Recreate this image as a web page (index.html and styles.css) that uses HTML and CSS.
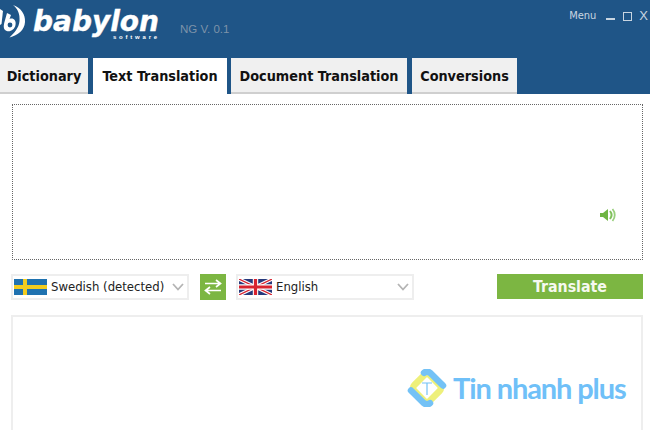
FILE: index.html
```html
<!DOCTYPE html>
<html lang="en">
<head>
<meta charset="utf-8">
<title>Babylon</title>
<link rel="stylesheet" href="styles.css">
</head>
<body>
<div class="app">
  <header class="header">
    <div class="topbar">
      <div class="brand">
        <svg class="mark" viewBox="0 0 30 42" width="30" height="42" aria-hidden="true">
          <path d="M0 9 L3 11 L1.500 24 L0 25Z" fill="#fff"/>
          <path d="M13 5 C21 8 25.500 14 25 22 C24.500 30 18 35.500 9.500 37.500 C14 33 19 28 19.500 21 C20 14 18 9 13 5Z" fill="#fff"/>
          <path d="M7 13 L11 15 L9.500 19 C13 17.500 16.500 20 15.500 25 C14.500 30.500 8.500 33 5 30 C3.500 28.500 3.500 26 4.200 23Z" fill="#fff"/>
          <circle cx="10" cy="25" r="2.400" fill="#1f5587"/>
        </svg>
        <div class="wordmark">
          <span class="word">babylon</span>
          <span class="soft">software</span>
        </div>
        <span class="version">NG V. 0.1</span>
      </div>
      <div class="winctl">
        <span class="menu">Menu</span>
        <span class="min"></span>
        <span class="max"></span>
        <span class="close">X</span>
      </div>
    </div>
    <nav class="tabs">
      <span class="tab tab-dict">Dictionary</span>
      <span class="tab tab-text active">Text Translation</span>
      <span class="tab tab-doc">Document Translation</span>
      <span class="tab tab-conv">Conversions</span>
    </nav>
  </header>
  <main class="content">
    <div class="input">
      <svg class="speaker" viewBox="0 0 16 14" width="16" height="14" aria-hidden="true">
        <path d="M0 5 H3 L8 1 V13 L3 9 H0Z" fill="#6fb544"/>
        <path d="M10 3 C12 5.500 12 8.500 10 11" fill="none" stroke="#7fc05a" stroke-width="2"/>
        <path d="M12.500 1 C15.500 4.500 15.500 9.500 12.500 13" fill="none" stroke="#98cf7c" stroke-width="1.800"/>
      </svg>
    </div>
    <div class="controls">
      <div class="select">
        <svg class="flag" viewBox="0 0 33 16" width="33" height="16" aria-hidden="true">
          <rect width="33" height="16" fill="#1f72b0"/>
          <rect x="9" width="4" height="16" fill="#f2cc1f"/>
          <rect y="6" width="33" height="4" fill="#f2cc1f"/>
        </svg>
        <span class="lang">Swedish (detected)</span>
        <svg class="chev" viewBox="0 0 12 8" width="12" height="8" aria-hidden="true"><path d="M1 1 L6 6.500 L11 1" fill="none" stroke="#b4b4b4" stroke-width="1.800"/></svg>
      </div>
      <div class="swap">
        <svg viewBox="0 0 18 16" width="18" height="16" aria-hidden="true">
          <path d="M1 4.500 H16 M12 1 L16.500 4.500 L12 8" fill="none" stroke="#fff" stroke-width="1.700"/>
          <path d="M17 11.500 H2 M6 8 L1.500 11.500 L6 15" fill="none" stroke="#fff" stroke-width="1.700"/>
        </svg>
      </div>
      <div class="select">
        <svg class="flag" viewBox="0 0 33 16" width="33" height="16" aria-hidden="true">
          <rect width="33" height="16" fill="#27397c"/>
          <path d="M0 0 L33 16 M33 0 L0 16" stroke="#fff" stroke-width="3.400"/>
          <path d="M0 0 L33 16 M33 0 L0 16" stroke="#d8232f" stroke-width="1.200"/>
          <path d="M16.500 0 V16 M0 8 H33" stroke="#fff" stroke-width="5.400"/>
          <path d="M16.500 0 V16 M0 8 H33" stroke="#d8232f" stroke-width="3.200"/>
        </svg>
        <span class="lang">English</span>
        <svg class="chev" viewBox="0 0 12 8" width="12" height="8" aria-hidden="true"><path d="M1 1 L6 6.500 L11 1" fill="none" stroke="#b4b4b4" stroke-width="1.800"/></svg>
      </div>
      <button class="translate" type="button">Translate</button>
    </div>
    <div class="output"></div>
  </main>
  <div class="watermark">
    <svg viewBox="0 0 40 38" width="40" height="38" aria-hidden="true">
      <rect x="9" y="8" width="22" height="22" rx="4" transform="rotate(45 20 19)" fill="none" stroke="#eef07a" stroke-width="6.500"/>
      <path d="M17 3.800 Q20 1.500 23 3.800 L36 16.500" fill="none" stroke="#74c2f6" stroke-width="6.500" stroke-linecap="round"/>
      <path d="M4 21.500 L17 34.200 Q20 36.500 23 34.200" fill="none" stroke="#74c2f6" stroke-width="6.500" stroke-linecap="round"/>
      <path d="M15 14 H25 M20 14 V26" fill="none" stroke="#74c2f6" stroke-width="1.200"/>
    </svg>
    <span class="wm-text">Tin nhanh plus</span>
  </div>
</div>
</body>
</html>
```
FILE: styles.css
```css
* { box-sizing: border-box; }
html, body { margin: 0; padding: 0; }
body { background: #fff; font-family: "DejaVu Sans", sans-serif; overflow: hidden; }
.app { width: 650px; height: 430px; overflow: hidden; position: relative; }

.header { height: 94px; background: #1f5587; display: flex; flex-direction: column; justify-content: space-between; }
.topbar { height: 58px; display: flex; justify-content: space-between; align-items: flex-start; }
.brand { display: flex; align-items: flex-start; }
.mark { display: block; flex: none; }
.wordmark { display: flex; flex-direction: column; align-items: flex-end; margin-left: 3px; padding-top: 7px; width: 126px; }
.word { font: italic 700 28px/30px "DejaVu Sans", sans-serif; color: #fff; -webkit-text-stroke: 0.4px #fff; white-space: nowrap; }
.soft { font: 700 6px/6px "Liberation Sans", sans-serif; letter-spacing: 2.800px; color: #fff; margin-top: -3px; margin-right: -1px; }
.version { font: 11.500px/14px "Liberation Sans", sans-serif; color: #7d93a9; margin: 22px 0 0 21px; white-space: nowrap; }

.winctl { display: flex; align-items: center; color: #c8d5e1; margin: 9px 2px 0 0; height: 14px; }
.menu { font: 11px/14px "DejaVu Sans Condensed", "DejaVu Sans", sans-serif; margin-right: 10px; }
.min { width: 9px; height: 2px; background: #c8d5e1; margin: 5px 8px 0 0; }
.max { width: 9px; height: 9px; border: 1px solid #c8d5e1; margin: 1px 7px 0 0; }
.close { font: 13px/14px "Liberation Sans", sans-serif; }

.tabs { height: 36px; display: flex; gap: 5px; align-items: stretch; }
.tab { background: #f0f0f0; border-bottom: 2px solid #cfcfcf; font: 700 14.300px/36px "DejaVu Sans Condensed", "DejaVu Sans", sans-serif; color: #111; text-align: center; white-space: nowrap; }
.tab-dict { width: 88px; }
.tab-text { width: 134px; }
.tab-doc { width: 176px; margin-left: -1px; }
.tab-conv { width: 105px; }
.active { background: #fff; border-bottom-color: #fff; }

.content { padding: 10px 7px 0 11px; }
.input { height: 156px; margin-left: 1px; border: 1px dotted #666; display: flex; justify-content: flex-end; align-items: flex-start; padding: 103px 26px 0 0; }
.controls { display: flex; align-items: stretch; margin-top: 14px; height: 26px; }
.select { width: 178px; border: 2px solid #eeeeee; display: flex; align-items: center; padding: 0 0 0 1px; background: #fff; }
.flag { display: block; flex: none; }
.lang { font: 13px/16px "DejaVu Sans Condensed", "DejaVu Sans", sans-serif; color: #222; margin-left: 4px; flex: 1; white-space: nowrap; }
.chev { flex: none; margin-right: 3px; }
.swap { width: 26px; margin: 0 10px 0 11px; background: #7cb642; display: flex; align-items: center; justify-content: center; }
.translate { width: 146px; height: 25px; margin-left: 83px; border: 0; padding: 0; background: #7cb642; color: #f6f9f0; font: 700 15.800px/25px "DejaVu Sans Condensed", "DejaVu Sans", sans-serif; }
.output { height: 140px; margin-top: 15px; border: 2px solid #eeeeee; }

.watermark { position: absolute; left: 407px; top: 369px; display: flex; align-items: center; gap: 6px; }
.wm-text { font: 700 29px/36px Lato, sans-serif; letter-spacing: -1.100px; color: #6fc0f8; white-space: nowrap; }
```
